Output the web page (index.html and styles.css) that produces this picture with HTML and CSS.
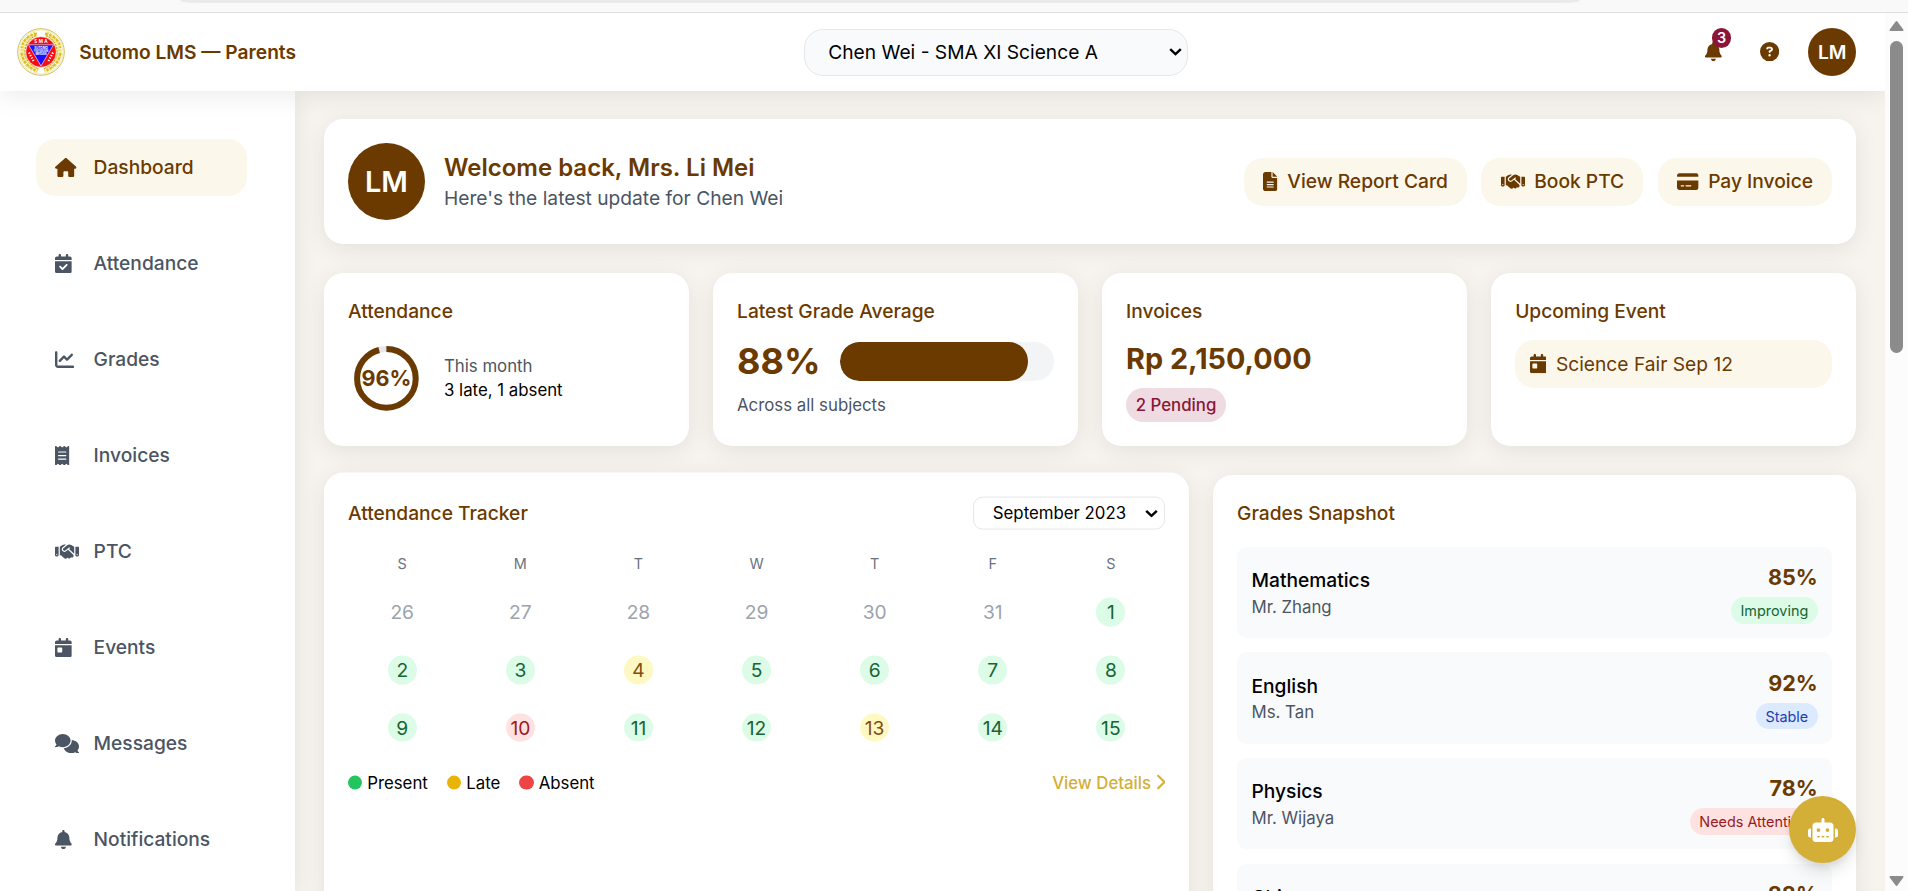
FILE: index.html
```html
<!DOCTYPE html>
<html lang="en">
<head>
<meta charset="utf-8">
<title>Sutomo LMS — Parents</title>
<link rel="stylesheet" href="styles.css">
</head>
<body>
<svg class="defs" aria-hidden="true">
  <symbol id="i-house" viewBox="0 0 576 512"><path d="M575.8 255.5c0 18-15 32.1-32 32.1h-32l.7 160.2c0 2.7-.2 5.4-.5 8.1V472c0 22.1-17.9 40-40 40H456c-1.1 0-2.2 0-3.3-.1c-1.4 .1-2.8 .1-4.2 .1H416 392c-22.1 0-40-17.9-40-40V448 384c0-17.7-14.3-32-32-32H256c-17.7 0-32 14.3-32 32v64 24c0 22.1-17.9 40-40 40H160 128.1c-1.5 0-3-.1-4.5-.2c-1.2 .1-2.4 .2-3.6 .2H104c-22.1 0-40-17.9-40-40V360c0-.9 0-1.9 .1-2.8V287.6H32c-18 0-32-14-32-32.1c0-9 3-17 10-24L266.4 8c7-7 15-8 22-8s15 2 21 7L564.8 231.5c8 7 12 15 11 24z"/></symbol>
  <symbol id="i-calcheck" viewBox="0 0 448 512"><path d="M128 0c17.7 0 32 14.3 32 32V64H288V32c0-17.7 14.3-32 32-32s32 14.3 32 32V64h48c26.5 0 48 21.5 48 48v48H0V112C0 85.5 21.5 64 48 64H96V32c0-17.7 14.3-32 32-32zM0 192H448V464c0 26.5-21.5 48-48 48H48c-26.5 0-48-21.5-48-48V192zM329 305c9.4-9.4 9.4-24.6 0-33.9s-24.6-9.4-33.9 0l-95 95-47-47c-9.4-9.4-24.6-9.4-33.9 0s-9.4 24.6 0 33.9l64 64c9.4 9.4 24.6 9.4 33.9 0L329 305z"/></symbol>
  <symbol id="i-calday" viewBox="0 0 448 512"><path d="M128 0c17.7 0 32 14.3 32 32V64H288V32c0-17.7 14.3-32 32-32s32 14.3 32 32V64h48c26.5 0 48 21.5 48 48v48H0V112C0 85.5 21.5 64 48 64H96V32c0-17.7 14.3-32 32-32zM0 192H448V464c0 26.5-21.5 48-48 48H48c-26.5 0-48-21.5-48-48V192zm80 64c-8.8 0-16 7.2-16 16v96c0 8.8 7.2 16 16 16h96c8.8 0 16-7.2 16-16V272c0-8.8-7.2-16-16-16H80z"/></symbol>
  <symbol id="i-chart" viewBox="0 0 512 512"><path d="M64 64c0-17.7-14.3-32-32-32S0 46.3 0 64V400c0 44.2 35.8 80 80 80H480c17.7 0 32-14.3 32-32s-14.3-32-32-32H80c-8.8 0-16-7.2-16-16V64zm406.6 86.6c12.5-12.5 12.5-32.8 0-45.3s-32.8-12.5-45.3 0L320 210.7l-57.4-57.4c-12.5-12.5-32.8-12.5-45.3 0l-112 112c-12.5 12.5-12.5 32.8 0 45.3s32.8 12.5 45.3 0L240 221.3l57.4 57.4c12.5 12.5 32.8 12.5 45.3 0l128-128z"/></symbol>
  <symbol id="i-receipt" viewBox="0 0 384 512"><path d="M14 2.2C22.5-1.7 32.5-.3 39.6 5.8L80 40.4 120.4 5.8c9-7.7 22.3-7.7 31.2 0L192 40.4 232.4 5.8c9-7.7 22.3-7.7 31.2 0L304 40.4 344.4 5.8c7.1-6.1 17.1-7.5 25.6-3.6s14 12.4 14 21.8V488c0 9.4-5.5 17.9-14 21.8s-18.5 2.5-25.6-3.6L304 471.6l-40.4 34.6c-9 7.7-22.3 7.7-31.2 0L192 471.6l-40.4 34.6c-9 7.7-22.3 7.7-31.2 0L80 471.6 39.6 506.2c-7.1 6.1-17.1 7.5-25.6 3.6S0 497.4 0 488V24C0 14.6 5.5 6.1 14 2.2zM96 144c-8.8 0-16 7.2-16 16s7.2 16 16 16H288c8.8 0 16-7.2 16-16s-7.2-16-16-16H96zM80 352c0 8.8 7.2 16 16 16H288c8.8 0 16-7.2 16-16s-7.2-16-16-16H96c-8.8 0-16 7.2-16 16zM96 240c-8.8 0-16 7.2-16 16s7.2 16 16 16H288c8.8 0 16-7.2 16-16s-7.2-16-16-16H96z"/></symbol>
  <symbol id="i-hands" viewBox="0 0 640 512"><path d="M323.4 85.2l-96.8 78.4c-16.1 13-19.2 36.4-7 53.1c12.9 17.8 38 21.3 55.3 7.8l99.3-77.2c7-5.4 17-4.2 22.5 2.8s4.2 17-2.8 22.5l-20.9 16.2L512 316.8V128h-.7l-3.9-2.5L434.8 79c-15.3-9.8-33.2-15-51.4-15c-21.8 0-43 7.5-60 21.2zm22.8 124.4l-51.7 40.2C263 274.3 217.3 268 193.7 235.6c-22.2-30.5-16.6-73.1 12.7-96.8l83.2-67.3c-11.6-4.9-24.1-7.4-36.8-7.4C234 64 215.7 69.6 200 80l-72 48V352h28.2l91.4 83.4c19.6 17.9 49.9 16.5 67.8-3.1c5.5-6.1 9.2-13.2 11.1-20.6l17 15.6c19.5 17.9 49.9 16.6 67.8-2.9c4.5-4.9 7.8-10.6 9.9-16.5c19.4 13 45.8 10.3 62.1-7.5c17.9-19.5 16.6-49.9-2.9-67.8l-134.2-123zM16 128c-8.8 0-16 7.2-16 16V352c0 17.7 14.3 32 32 32H64c17.7 0 32-14.3 32-32V128H16zM48 320a16 16 0 1 1 0 32 16 16 0 1 1 0-32zM544 128V352c0 17.7 14.3 32 32 32h32c17.7 0 32-14.3 32-32V144c0-8.8-7.2-16-16-16H544zm32 208a16 16 0 1 1 32 0 16 16 0 1 1-32 0z"/></symbol>
  <symbol id="i-comments" viewBox="0 0 640 512"><path d="M208 352c114.9 0 208-78.8 208-176S322.9 0 208 0S0 78.8 0 176c0 38.6 14.7 74.3 39.6 103.4c-3.5 9.4-8.7 17.7-14.2 24.7c-4.8 6.2-9.7 11-13.3 14.3c-1.8 1.6-3.3 2.9-4.3 3.7c-.5 .4-.9 .7-1.1 .8l-.2 .2C1 327.2-1.4 334.4 .8 340.9S9.1 352 16 352c21.8 0 43.8-5.6 62.1-12.5c9.2-3.5 17.8-7.4 25.2-11.4C134.1 343.3 169.8 352 208 352zM448 176c0 112.3-99.1 196.9-216.5 207C255.8 457.4 336.4 512 432 512c38.2 0 73.9-8.7 104.7-23.9c7.5 4 16 7.9 25.2 11.4c18.3 6.9 40.3 12.5 62.1 12.5c6.9 0 13.1-4.5 15.2-11.1c2.1-6.6-.2-13.8-5.8-17.9l-.2-.2c-.2-.2-.6-.4-1.1-.8c-1-.8-2.5-2-4.3-3.7c-3.6-3.3-8.5-8.1-13.3-14.3c-5.5-7-10.7-15.4-14.2-24.7c24.9-29 39.6-64.7 39.6-103.4c0-92.8-84.9-168.9-192.6-175.5c.4 5.1 .6 10.3 .6 15.5z"/></symbol>
  <symbol id="i-bell" viewBox="0 0 448 512"><path d="M224 0c-17.7 0-32 14.3-32 32V51.2C119 66 64 130.6 64 208v18.8c0 47-17.3 92.4-48.5 127.6l-7.4 8.3c-8.4 9.4-10.4 22.9-5.3 34.4S19.4 416 32 416H416c12.6 0 24-7.4 29.2-18.9s3.1-25-5.3-34.4l-7.4-8.3C401.3 319.2 384 273.9 384 226.8V208c0-77.4-55-142-128-156.8V32c0-17.7-14.3-32-32-32zm45.3 493.3c12-12 18.7-28.3 18.7-45.3H224 160c0 17 6.7 33.3 18.7 45.3s28.3 18.7 45.3 18.7s33.3-6.7 45.3-18.7z"/></symbol>
  <symbol id="i-question" viewBox="0 0 512 512"><path d="M256 512A256 256 0 1 0 256 0a256 256 0 1 0 0 512zM169.8 165.3c7.9-22.3 29.1-37.3 52.8-37.3h58.3c34.9 0 63.1 28.3 63.1 63.1c0 22.6-12.1 43.5-31.7 54.8L280 264.4c-.2 13-10.9 23.6-24 23.6c-13.3 0-24-10.7-24-24V250.5c0-8.6 4.6-16.5 12.1-20.8l44.3-25.4c4.7-2.7 7.6-7.7 7.6-13.1c0-8.4-6.8-15.1-15.1-15.1H222.6c-3.4 0-6.4 2.1-7.5 5.3l-.4 1.2c-4.4 12.5-18.2 19-30.6 14.6s-19-18.2-14.6-30.6l.4-1.2zM224 352a32 32 0 1 1 64 0 32 32 0 1 1-64 0z"/></symbol>
  <symbol id="i-file" viewBox="0 0 384 512"><path d="M64 0C28.7 0 0 28.7 0 64V448c0 35.3 28.7 64 64 64H320c35.3 0 64-28.7 64-64V160H256c-17.7 0-32-14.3-32-32V0H64zM256 0V128H384L256 0zM112 256H272c8.8 0 16 7.2 16 16s-7.2 16-16 16H112c-8.8 0-16-7.2-16-16s7.2-16 16-16zm0 64H272c8.8 0 16 7.2 16 16s-7.2 16-16 16H112c-8.8 0-16-7.2-16-16s7.2-16 16-16zm0 64H272c8.8 0 16 7.2 16 16s-7.2 16-16 16H112c-8.8 0-16-7.2-16-16s7.2-16 16-16z"/></symbol>
  <symbol id="i-card" viewBox="0 0 576 512"><path d="M64 32C28.7 32 0 60.7 0 96v32H576V96c0-35.3-28.7-64-64-64H64zM576 224H0V416c0 35.3 28.7 64 64 64H512c35.3 0 64-28.7 64-64V224zM112 352h64c8.8 0 16 7.2 16 16s-7.2 16-16 16H112c-8.8 0-16-7.2-16-16s7.2-16 16-16zm112 16c0-8.8 7.2-16 16-16H368c8.8 0 16 7.2 16 16s-7.2 16-16 16H240c-8.8 0-16-7.2-16-16z"/></symbol>
  <symbol id="i-robot" viewBox="0 0 640 512"><path d="M320 0c17.7 0 32 14.3 32 32V96H472c39.8 0 72 32.2 72 72V440c0 39.8-32.2 72-72 72H168c-39.8 0-72-32.2-72-72V168c0-39.8 32.2-72 72-72H288V32c0-17.7 14.3-32 32-32zM208 384c-8.8 0-16 7.2-16 16s7.2 16 16 16h32c8.8 0 16-7.2 16-16s-7.2-16-16-16H208zm96 0c-8.8 0-16 7.2-16 16s7.2 16 16 16h32c8.8 0 16-7.2 16-16s-7.2-16-16-16H304zm96 0c-8.8 0-16 7.2-16 16s7.2 16 16 16h32c8.8 0 16-7.2 16-16s-7.2-16-16-16H400zM264 256a40 40 0 1 0 -80 0 40 40 0 1 0 80 0zm152 40a40 40 0 1 0 0-80 40 40 0 1 0 0 80zM48 224H64V416H48c-26.5 0-48-21.5-48-48V272c0-26.5 21.5-48 48-48zm544 0c26.5 0 48 21.5 48 48v96c0 26.5-21.5 48-48 48H576V224h16z"/></symbol>
  <symbol id="i-right" viewBox="0 0 320 512"><path d="M310.6 233.4c12.5 12.5 12.5 32.8 0 45.3l-192 192c-12.5 12.5-32.8 12.5-45.3 0s-12.5-32.8 0-45.3L242.7 256 73.4 86.6c-12.5-12.5-12.5-32.8 0-45.3s32.8-12.5 45.3 0l192 192z"/></symbol>
  <symbol id="i-down" viewBox="0 0 13 8"><path d="M1.2 1.2L6.5 6.2L11.8 1.2" fill="none" stroke="#000" stroke-width="2.4"/></symbol>
</svg>

<div class="chrome"><div class="address"></div></div>

<div class="window">
  <div class="page">
    <header class="topbar">
      <div class="brand">
        <svg class="logo" viewBox="0 0 48 48">
          <circle cx="24" cy="24" r="23.3" fill="#fff" stroke="#cdb545" stroke-width=".9"/>
          <circle cx="24" cy="24" r="22" fill="none" stroke="#eadf9e" stroke-width=".7"/>
          <path d="M19 6C10 9 5 17 6 27c1 7 6 12 15 15.500M29 6C38 9 43 17 42 27c-1 7-6 12-15 15.500" fill="none" stroke="#f0e07a" stroke-width="5.500" stroke-dasharray="2.400 .6"/>
          <path d="M20 5.500C11 8 6 12 4.500 20M28 5.500C37 8 42 12 43.500 20M4.500 25c1 7 5 13 14 17.500M43.500 25c-1 7-5 13-14 17.500" fill="none" stroke="#d9bc1e" stroke-width="2" stroke-dasharray="2.800 1.400"/>
          <path d="M19 7.500C11 11 7.500 18 8 26c1 6 5 11 13 15M29 7.500C37 11 40.500 18 40 26c-1 6-5 11-13 15" fill="none" stroke="#a88c16" stroke-width=".8" stroke-dasharray="2 1.200"/>
          <circle cx="24" cy="24" r="15.200" fill="#f50d10" stroke="#fff" stroke-width=".5"/>
          <path d="M11.500 16.800H36.500L24 38z" fill="#1f0dff" stroke="#fff" stroke-width=".6"/>
          <text x="24.700" y="15" class="logo-sma">SMA</text>
          <text x="24" y="21" class="logo-small">SUTOMO</text>
          <text x="24" y="24.200" class="logo-small">YAYASAN</text>
          <text x="24" y="27.400" class="logo-small">MEDAN</text>
          <path d="M12 24.500l5 9.500M36 24.500l-5 9.500" stroke="#fff" stroke-width="2.200" stroke-dasharray="1.300 1.500" fill="none"/>
        </svg>
        <span>Sutomo LMS — Parents</span>
      </div>
      <div class="select student" role="combobox"><span>Chen Wei - SMA XI Science A</span><svg><use href="#i-down"/></svg></div>
      <div class="actions">
        <span class="bell"><svg class="icon w448"><use href="#i-bell"/></svg><b>3</b></span>
        <svg class="icon w512"><use href="#i-question"/></svg>
        <div class="avatar">LM</div>
      </div>
    </header>

    <div class="body">
      <nav class="sidebar">
        <a class="nav active"><i><svg class="icon w576"><use href="#i-house"/></svg></i>Dashboard</a>
        <a class="nav"><i><svg class="icon w448"><use href="#i-calcheck"/></svg></i>Attendance</a>
        <a class="nav"><i><svg class="icon w512"><use href="#i-chart"/></svg></i>Grades</a>
        <a class="nav"><i><svg class="icon w384"><use href="#i-receipt"/></svg></i>Invoices</a>
        <a class="nav"><i><svg class="icon w640"><use href="#i-hands"/></svg></i>PTC</a>
        <a class="nav"><i><svg class="icon w448"><use href="#i-calday"/></svg></i>Events</a>
        <a class="nav"><i><svg class="icon w640"><use href="#i-comments"/></svg></i>Messages</a>
        <a class="nav"><i><svg class="icon w448"><use href="#i-bell"/></svg></i>Notifications</a>
      </nav>

      <main class="main">
        <section class="card welcome">
          <div class="avatar large">LM</div>
          <div class="greeting"><h1>Welcome back, Mrs. Li Mei</h1><p>Here's the latest update for Chen Wei</p></div>
          <div class="quick">
            <a class="chip"><svg class="icon w384"><use href="#i-file"/></svg>View Report Card</a>
            <a class="chip"><svg class="icon w640"><use href="#i-hands"/></svg>Book PTC</a>
            <a class="chip"><svg class="icon w576"><use href="#i-card"/></svg>Pay Invoice</a>
          </div>
        </section>

        <section class="stats">
          <div class="card">
            <h2>Attendance</h2>
            <div class="attendance">
              <div class="ring">
                <svg viewBox="0 0 76.8 76.8"><circle cx="38.4" cy="38.4" r="29.3" stroke="#e5e7eb"/><circle cx="38.4" cy="38.4" r="29.3" stroke="#6b3a00" pathLength="100" stroke-dasharray="96 4"/></svg>
                <b>96%</b>
              </div>
              <div class="small"><p class="muted">This month</p><p>3 late, 1 absent</p></div>
            </div>
          </div>
          <div class="card">
            <h2>Latest Grade Average</h2>
            <div class="average"><b>88%</b><div class="bar"><div class="fill" style="width:88%"></div></div></div>
            <p class="small muted note">Across all subjects</p>
          </div>
          <div class="card">
            <h2>Invoices</h2>
            <p class="amount">Rp 2,150,000</p>
            <span class="pending">2 Pending</span>
          </div>
          <div class="card">
            <h2>Upcoming Event</h2>
            <div class="event"><svg class="icon w448"><use href="#i-calday"/></svg>Science Fair Sep 12</div>
          </div>
        </section>

        <section class="panels">
          <div class="card tracker">
            <div class="tracker-head"><h2>Attendance Tracker</h2><div class="select month" role="combobox"><span>September 2023</span><svg><use href="#i-down"/></svg></div></div>
            <div class="calendar">
              <div class="dow">S</div><div class="dow">M</div><div class="dow">T</div><div class="dow">W</div><div class="dow">T</div><div class="dow">F</div><div class="dow">S</div>
              <div class="day out"><span>26</span></div><div class="day out"><span>27</span></div><div class="day out"><span>28</span></div><div class="day out"><span>29</span></div><div class="day out"><span>30</span></div><div class="day out"><span>31</span></div><div class="day"><span>1</span></div>
              <div class="day"><span>2</span></div><div class="day"><span>3</span></div><div class="day late"><span>4</span></div><div class="day"><span>5</span></div><div class="day"><span>6</span></div><div class="day"><span>7</span></div><div class="day"><span>8</span></div>
              <div class="day"><span>9</span></div><div class="day absent"><span>10</span></div><div class="day"><span>11</span></div><div class="day"><span>12</span></div><div class="day late"><span>13</span></div><div class="day"><span>14</span></div><div class="day"><span>15</span></div>
            </div>
            <div class="legend small">
              <span class="key"><i class="dot green"></i>Present</span>
              <span class="key"><i class="dot amber"></i>Late</span>
              <span class="key"><i class="dot red"></i>Absent</span>
              <a class="details">View Details<svg class="chev"><use href="#i-right"/></svg></a>
            </div>
          </div>

          <div class="card grades">
            <h2>Grades Snapshot</h2>
            <div class="subjects">
              <div class="subject"><div><h3>Mathematics</h3><p class="small muted">Mr. Zhang</p></div><div class="score"><b>85%</b><div><span class="badge up">Improving</span></div></div></div>
              <div class="subject"><div><h3>English</h3><p class="small muted">Ms. Tan</p></div><div class="score"><b>92%</b><div><span class="badge flat">Stable</span></div></div></div>
              <div class="subject"><div><h3>Physics</h3><p class="small muted">Mr. Wijaya</p></div><div class="score"><b>78%</b><div><span class="badge down">Needs Attention</span></div></div></div>
              <div class="subject"><div><h3>Chinese</h3></div><div class="score"><b>88%</b><div></div></div></div>
            </div>
          </div>
        </section>
      </main>
    </div>
    <button class="fab" aria-label="Assistant"><svg><use href="#i-robot"/></svg></button>
  </div>

  <div class="scrollbar">
    <svg class="arrow" viewBox="0 0 15 11"><path d="M7.500 1.500L13.500 9.500H1.500z"/></svg>
    <div class="thumb"></div>
    <svg class="arrow end" viewBox="0 0 15 11"><path d="M7.500 9.500L13.500 1.500H1.500z"/></svg>
  </div>
</div>
</body>
</html>
```

FILE: styles.css
```css
html { font-size: 19.2px; }
* { box-sizing: border-box; margin: 0; padding: 0; }
body {
  height: 891px;
  display: flex;
  flex-direction: column;
  overflow: hidden;
  font-family: Inter, "Liberation Sans", sans-serif;
  font-size: 1rem;
  line-height: 1.5;
  color: #000;
  background: #fff;
}
.defs { position: absolute; width: 0; height: 0; }
h1, h2, h3 { font-size: 1rem; font-weight: 500; }
h1, h2 { color: #6b3a00; }
.small { font-size: .875rem; line-height: 24px; }
.muted { color: #4b5563; }

/* icons keep a 1em height, width follows the glyph box */
.icon { display: block; height: 19.2px; flex: none; fill: currentColor; }
.w384 { width: 14.4px; }
.w448 { width: 16.8px; }
.w512 { width: 19.2px; }
.w576 { width: 21.6px; }
.w640 { width: 24px; }

.chrome { height: 13px; flex: none; background: #f9f9f9; border-bottom: 1px solid #dfdfdf; padding: 0 328px 0 180px; }
.address { height: 3px; background: #e9ebea; border-radius: 0 0 14px 14px / 0 0 3px 3px; }
.window { flex: 1; min-height: 0; display: flex; }
.page { flex: 1; min-width: 0; display: flex; flex-direction: column; overflow: hidden; background: #f7f3ee; }

.topbar {
  height: 78px;
  flex: none;
  display: flex;
  align-items: center;
  justify-content: space-between;
  padding: 0 28.8px 0 16.8px;
  background: #fff;
  box-shadow: 0 5px 24px rgba(0, 0, 0, .08);
  z-index: 2;
}
.brand { display: flex; align-items: center; gap: 14.4px; width: 787.4px; font-weight: 600; color: #6b3a00; }
.logo { width: 48px; height: 48px; }
.logo-sma { font: 700 4.500px Inter, sans-serif; letter-spacing: 1.5px; text-anchor: middle; fill: #fff; }
.logo-small { font: 700 3px Inter, sans-serif; text-anchor: middle; fill: #fff; }
.select { display: flex; align-items: center; justify-content: space-between; border: 1px solid #e5e7eb; }
.select svg { width: 13px; height: 8px; }
.student { width: 384px; height: 47px; padding: 0 5px 0 23px; border-radius: 19.2px; background: #f9fafb; }
.actions { flex: 1; display: flex; align-items: center; justify-content: flex-end; color: #6b3a00; }
.bell { position: relative; margin-right: 38.4px; }
.bell b {
  position: absolute;
  left: 7px;
  top: -14px;
  width: 19.2px;
  height: 19.2px;
  border-radius: 50%;
  background: #8b1538;
  color: #fff;
  font-size: .75rem;
  font-weight: 600;
  line-height: 19.2px;
  text-align: center;
}
.avatar {
  width: 48px;
  height: 48px;
  margin-left: 28.8px;
  border-radius: 50%;
  background: #6b3a00;
  color: #fff;
  font-weight: 600;
  display: flex;
  align-items: center;
  justify-content: center;
  flex: none;
}
.avatar.large { width: 76.8px; height: 76.8px; margin: 0; font-size: 1.5rem; }

.body { flex: 1; min-height: 0; display: flex; }
.sidebar {
  width: 295.2px;
  flex: none;
  display: flex;
  flex-direction: column;
  gap: 38.4px;
  padding: 47.8px 48px 0 36px;
  background: #fff;
  box-shadow: 0 5px 24px rgba(0, 0, 0, .08);
  z-index: 1;
}
.nav { height: 57.6px; flex: none; display: flex; align-items: center; gap: 14.4px; padding: 0 19.2px; border-radius: 19.2px; font-weight: 500; color: #4b5563; }
.nav i { width: 24px; }
.nav.active { background: #fbf7eb; color: #6b3a00; }

.main { flex: 1; min-width: 0; padding: 28.4px 28.8px 0; display: flex; flex-direction: column; gap: 28.8px; }
.card { background: #fff; border-radius: 19.2px; padding: 24px; box-shadow: 0 5px 24px rgba(0, 0, 0, .08); }
.welcome { display: flex; align-items: center; flex: none; }
.greeting { flex: 1; margin-left: 19.2px; color: #4b5563; }
.greeting h1 { font-size: 1.25rem; line-height: 33.6px; font-weight: 600; }
.quick { display: flex; gap: 14.4px; }
.chip, .event { display: flex; align-items: center; gap: 9.6px; height: 48px; border-radius: 19.2px; background: #fbf7eb; color: #6b3a00; }
.chip { padding: 0 19.2px; font-weight: 500; }
.event { padding: 0 14.4px; }

.stats { display: grid; grid-template-columns: repeat(4, 1fr); gap: 24px; height: 173px; flex: none; }
.stats h2 { margin-bottom: 14.2px; }
.attendance { display: flex; align-items: center; gap: 19.2px; }
.ring { display: grid; width: 76.8px; height: 76.8px; place-items: center; color: #6b3a00; }
.ring > * { grid-area: 1 / 1; }
.ring svg { width: 76.8px; height: 76.8px; transform: rotate(-90deg); fill: none; stroke-width: 6; }
.ring b { font-size: 1.125rem; font-weight: 700; }
.average { display: flex; align-items: center; gap: 19.2px; color: #6b3a00; }
.average b { font-size: 1.875rem; line-height: 43.2px; }
.bar { flex: 1; height: 38.4px; border-radius: 19.2px; background: #f3f4f6; overflow: hidden; }
.fill { height: 100%; border-radius: 19.2px; background: #6b3a00; }
.note { margin-top: 10px; }
.amount { font-size: 1.5rem; line-height: 38.4px; font-weight: 700; color: #6b3a00; margin-bottom: 9.6px; }
.pending { display: inline-block; padding: 4.8px 9.6px; border-radius: 19.2px; background: #eedce2; color: #8b1538; font-size: .875rem; line-height: 24px; font-weight: 500; }

.panels { flex: 1; min-height: 0; display: grid; grid-template-columns: 865fr 643fr; gap: 24px; align-items: start; }
.tracker, .grades { height: 520px; }
.tracker { transform: translateY(-2.4px); }
.tracker-head { display: flex; justify-content: space-between; align-items: center; margin-bottom: 20px; }
.month { width: 192.5px; height: 33.6px; border-radius: 9.6px; padding: 0 6px 0 19.2px; font-size: .875rem; }
.calendar { display: grid; grid-template-columns: repeat(7, 1fr); gap: 9.6px; text-align: center; }
.dow { height: 28.8px; font-size: .75rem; line-height: 28.8px; color: #6b7280; }
.day { height: 48px; padding: 9.6px 0; }
.day span { display: block; width: 28.8px; height: 28.8px; margin: 0 auto; border-radius: 50%; background: #dcfce7; color: #166534; line-height: 28.8px; }
.day.out span { background: none; color: #9ca3af; }
.day.late span { background: #fef9c3; color: #854d0e; }
.day.absent span { background: #fee2e2; color: #991b1b; }
.legend { display: flex; gap: 19.2px; margin-top: 18.8px; }
.key { display: flex; align-items: center; gap: 4.8px; }
.dot { width: 14.4px; height: 14.4px; border-radius: 50%; }
.green { background: #22c55e; }
.amber { background: #eab308; }
.red { background: #ef4444; }
.details { margin-left: auto; display: flex; align-items: center; gap: 3.5px; font-weight: 500; color: #d4af37; }
.chev { width: 10.5px; height: 16.8px; fill: currentColor; }

.subjects { display: flex; flex-direction: column; gap: 14.4px; margin-top: 19.2px; }
.subject { height: 91.2px; display: flex; align-items: flex-start; justify-content: space-between; padding: 14.4px; border-radius: 9.6px; background: #f9fafb; }
.subject h3 { margin-top: 4.8px; }
.score { text-align: right; }
.score b { display: block; font-size: 1.125rem; line-height: 33.6px; color: #6b3a00; }
.score div { height: 28.8px; }
.badge { padding: 4.8px 9.6px; border-radius: 19.2px; font-size: .75rem; }
.up { background: #dcfce7; color: #166534; }
.flat { background: #dbeafe; color: #1e40af; }
.down { background: #fee2e2; color: #991b1b; }

.fab {
  position: absolute;
  left: 1789px;
  top: 796px;
  width: 67.2px;
  height: 67.2px;
  border: 0;
  border-radius: 50%;
  background: #d4af37;
  color: #fff;
  display: flex;
  align-items: center;
  justify-content: center;
  box-shadow: 0 12px 18px -4px rgba(0, 0, 0, .12), 0 5px 8px -3px rgba(0, 0, 0, .1);
  z-index: 3;
}
.fab svg { width: 30px; height: 24px; fill: currentColor; }

.scrollbar { width: 23px; flex: none; display: flex; flex-direction: column; align-items: center; padding: 7px 0 4px; background: #fcfcfc; }
.arrow { width: 15px; height: 12px; fill: #8b8b8b; stroke: #8b8b8b; stroke-width: 2; stroke-linejoin: round; }
.thumb { width: 13px; height: 312px; margin-top: 9px; border-radius: 7px; background: #8b8b8b; }
.end { margin-top: auto; }
```
